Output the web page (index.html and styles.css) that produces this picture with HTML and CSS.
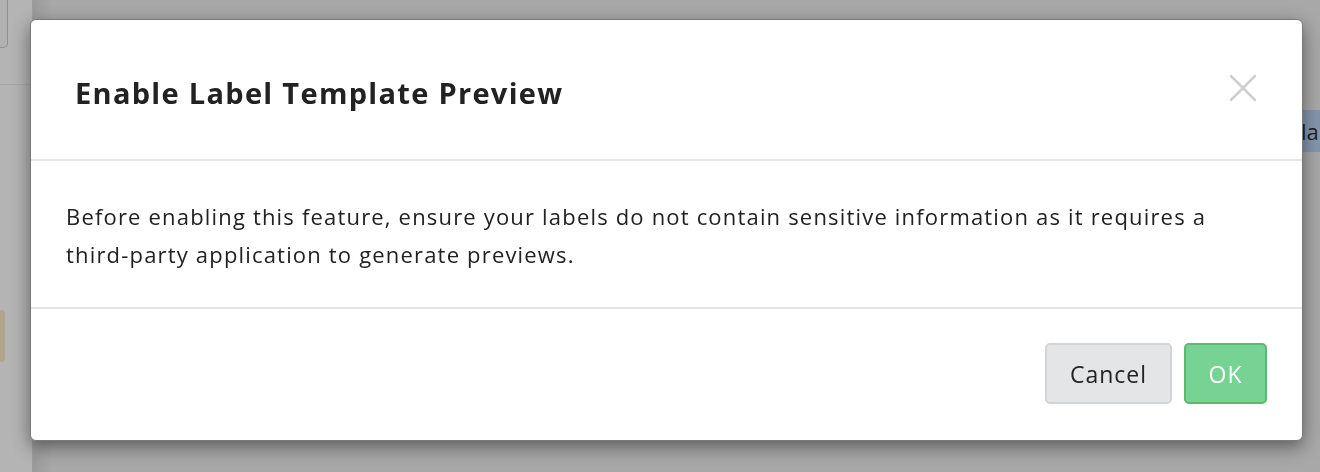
FILE: index.html
```html
<!DOCTYPE html>
<html lang="en">
<head>
<meta charset="utf-8">
<title>Enable Label Template Preview</title>
<link rel="stylesheet" href="styles.css">
</head>
<body>
<div class="page">
  <aside class="sidebar">
    <div class="side-card"></div>
    <div class="side-rule"></div>
    <div class="side-tag"></div>
  </aside>
  <main class="main">
    <div class="main-top"></div>
    <div class="main-row"><span class="hl">la</span></div>
  </main>
</div>
<div class="overlay">
  <div class="modal" role="dialog" aria-labelledby="mtitle">
    <header class="modal-header">
      <h2 id="mtitle" class="modal-title">Enable Label Template Preview</h2>
      <button class="close" aria-label="Close">
        <svg width="28" height="28" viewBox="0 0 28 28"><path d="M2 2 L26 26 M26 2 L2 26" stroke="#cfcfcf" stroke-width="2.6" stroke-linecap="round" fill="none"/></svg>
      </button>
    </header>
    <section class="modal-body">
      <p>Before enabling this feature, ensure your labels do not contain sensitive information as it requires a third-party application to generate previews.</p>
    </section>
    <footer class="modal-footer">
      <button class="btn btn-default">Cancel</button>
      <button class="btn btn-ok">OK</button>
    </footer>
  </div>
</div>
</body>
</html>
```
FILE: styles.css
```css
* { box-sizing: border-box; }
html, body { margin: 0; padding: 0; }
body {
  width: 1320px;
  height: 472px;
  overflow: hidden;
  font-family: "Open Sans", "Noto Sans", sans-serif;
  background: #a3a3a3;
}
.page {
  display: flex;
  height: 472px;
}
.sidebar {
  width: 33px;
  background: #b4b4b4;
  border-right: 1px solid #9d9d9d;
  display: flex;
  flex-direction: column;
}
.side-card {
  height: 48px;
  border: 1px solid #8f8f8f;
  border-left: none;
  border-top: none;
  border-radius: 0 0 5px 0;
  background: #b1b1b1;
  width: 8px;
}
.side-rule {
  height: 37px;
  border-bottom: 1px solid #a6a8aa;
}
.side-tag {
  margin-top: 225px;
  width: 5px;
  height: 52px;
  background: #b1a68c;
  border-radius: 0 4px 4px 0;
}
.main {
  flex: 1;
  background: linear-gradient(to right, #9a9a9a 0, #a8a8a8 20px, #a8a8a8 100%);
  display: flex;
  flex-direction: column;
}
.main-top { height: 110px; }
.main-row {
  height: 42px;
  display: flex;
  justify-content: flex-end;
}
.hl {
  background: #8496ad;
  color: #1e1e1e;
  font-size: 22px;
  line-height: 42px;
  width: 18px;
  overflow: hidden;
  white-space: nowrap;
  text-indent: -1px;
}
.overlay {
  position: fixed;
  inset: 0;
  padding: 19px 18px 0 30px;
}
.modal {
  width: 1273px;
  height: 422px;
  background: #fff;
  border-radius: 6px;
  border: 1px solid #7a7a7a;
  box-shadow: 0 6px 18px rgba(0,0,0,0.45);
  display: flex;
  flex-direction: column;
}
.modal-header {
  height: 141px;
  border-bottom: 2px solid #e5e5e5;
  display: flex;
  align-items: center;
  justify-content: space-between;
  padding: 6px 45px 0 44px;
}
.modal-title {
  margin: 0;
  font-size: 29px;
  font-weight: 700;
  letter-spacing: 1.3px;
  color: #222;
}
.close {
  background: none;
  border: 0;
  padding: 0;
  width: 28px;
  height: 28px;
  margin-top: -10px;
  cursor: pointer;
}
.close svg { display: block; }
.modal-body {
  height: 148px;
  border-bottom: 2px solid #e5e5e5;
  padding: 36px 35px 0 35px;
}
.modal-body p {
  margin: 0;
  font-size: 22px;
  letter-spacing: 1.18px;
  line-height: 38px;
  color: #222;
  max-width: 1170px;
}
.modal-footer {
  flex: 1;
  display: flex;
  justify-content: flex-end;
  align-items: flex-start;
  gap: 12px;
  padding: 34px 35px 0 0;
}
.btn {
  height: 61px;
  border-radius: 5px;
  font-family: inherit;
  font-size: 23px;
  letter-spacing: 1px;
  padding: 0;
}
.btn-default {
  width: 127px;
  background: #e4e5e7;
  border: 2px solid #d3d4d6;
  color: #222;
}
.btn-ok {
  width: 83px;
  background: #76d393;
  border: 2px solid #5cba6e;
  color: #fff;
}
```
